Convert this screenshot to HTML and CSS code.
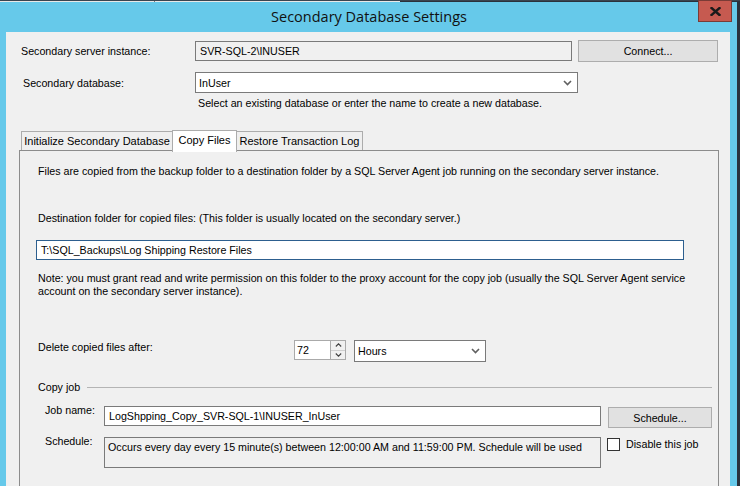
FILE: index.html
```html
<!DOCTYPE html>
<html>
<head>
<meta charset="utf-8">
<link rel="stylesheet" href="styles.css">
</head>
<body>
<div class="topstrip"><div class="ts-light"><span class="ts-line"></span></div></div>
<div class="window">
  <div class="titlebar">
    <span class="title">Secondary Database Settings</span>
    <div class="close"><svg width="11" height="9" viewBox="0 0 11 9"><path d="M1.5 1 L9.5 8 M9.5 1 L1.5 8" stroke="#1a1a1a" stroke-width="2.4" stroke-linecap="square"/></svg></div>
  </div>
  <div class="content">
    <div class="top-grid">
      <div class="lbl l1">Secondary server instance:</div>
      <div class="tb readonly srv">SVR-SQL-2\INUSER</div>
      <div class="btn connect">Connect...</div>
      <div class="lbl l2">Secondary database:</div>
      <div class="combo dbcombo"><span>InUser</span><svg class="chev" width="9" height="6" viewBox="0 0 9 6"><path d="M1 1 L4.5 4.5 L8 1" fill="none" stroke="#606060" stroke-width="1.6"/></svg></div>
      <div class="hint">Select an existing database or enter the name to create a new database.</div>
    </div>

    <div class="tabs">
      <div class="tab t1">Initialize Secondary Database</div>
      <div class="tab sel t2">Copy Files</div>
      <div class="tab t3">Restore Transaction Log</div>
    </div>
    <div class="panel">
      <p class="txt p1">Files are copied from the backup folder to a destination folder by a SQL Server Agent job running on the secondary server instance.</p>
      <p class="txt p2">Destination folder for copied files: (This folder is usually located on the secondary server.)</p>
      <div class="tb focus dest">T:\SQL_Backups\Log Shipping Restore Files</div>
      <p class="txt note">Note: you must grant read and write permission on this folder to the proxy account for the copy job (usually the SQL Server Agent service<br>account on the secondary server instance).</p>
      <div class="delrow">
        <div class="lbl dellbl">Delete copied files after:</div>
        <div class="spin">
          <div class="spinval">72</div>
          <div class="spinbtns">
            <div class="sb"><svg width="7" height="4" viewBox="0 0 7 4"><path d="M0.8 3.5 L3.5 0.8 L6.2 3.5" fill="none" stroke="#404040" stroke-width="1.1"/></svg></div>
            <div class="sb"><svg width="7" height="4" viewBox="0 0 7 4"><path d="M0.8 0.5 L3.5 3.2 L6.2 0.5" fill="none" stroke="#404040" stroke-width="1.1"/></svg></div>
          </div>
        </div>
        <div class="combo hours"><span>Hours</span><svg class="chev" width="9" height="6" viewBox="0 0 9 6"><path d="M1 1 L4.5 4.5 L8 1" fill="none" stroke="#606060" stroke-width="1.6"/></svg></div>
      </div>
      <div class="group">
        <span class="glbl">Copy job</span><span class="gline"></span>
      </div>
      <div class="jobrow">
        <div class="lbl jl">Job name:</div>
        <div class="tb jobname">LogShpping_Copy_SVR-SQL-1\INUSER_InUser</div>
        <div class="btn sched">Schedule...</div>
      </div>
      <div class="schedrow">
        <div class="lbl jl">Schedule:</div>
        <div class="tb readonly schedbox">Occurs every day every 15 minute(s) between 12:00:00 AM and 11:59:00 PM. Schedule will be used</div>
        <div class="chk"><span class="box"></span><span class="chklbl">Disable this job</span></div>
      </div>
    </div>
  </div>
</div>
</body>
</html>
```
FILE: styles.css
```css
html, body {
  margin: 0;
  padding: 0;
}
body {
  width: 740px;
  height: 486px;
  overflow: hidden;
  background: #2a323d;
  font-family: "Liberation Sans", Arial, sans-serif;
  font-size: 10.7px;
  color: #000;
}
.topstrip {
  height: 2px;
  border-top: 1px solid #3a4550;
  box-sizing: border-box;
  display: flex;
}
.ts-light {
  width: 400px;
  background: #e8e8e8;
  display: flex;
}
.ts-line {
  width: 1px;
  margin-left: 154px;
  background: #777;
}
.window {
  width: 737px;
  height: 484px;
  background: #66c9ea;
  position: relative;
  display: flex;
  flex-direction: column;
  padding: 0 7px 0 6px;
  box-sizing: border-box;
}
.titlebar {
  height: 30px;
  display: flex;
  align-items: center;
  justify-content: center;
  flex: none;
}
.title {
  font-family: "Open Sans", "Noto Sans", sans-serif;
  font-size: 14.5px;
  color: #111;
  margin-top: -1px;
  margin-left: 2px;
}
.close {
  position: absolute;
  right: 5px;
  top: -2px;
  width: 34px;
  height: 22px;
  box-sizing: border-box;
  background: #c65a50;
  border: 1px solid #7a3b36;
  display: flex;
  align-items: center;
  justify-content: center;
}
.content {
  flex: 1;
  min-height: 0;
  overflow: hidden;
  background: #f0f0f0;
  padding: 7px 0 0 15px;
  box-sizing: border-box;
}
.lbl {
  white-space: nowrap;
}
.top-grid {
  display: grid;
  grid-template-columns: 168px 377px 140px;
  column-gap: 6px;
  row-gap: 0;
  align-items: center;
}
.tb {
  box-sizing: border-box;
  background: #fff;
  border: 1px solid #7a7a7a;
  padding: 0 3px;
  display: flex;
  align-items: center;
  white-space: nowrap;
  overflow: hidden;
}
.tb.readonly {
  background: #f0f0f0;
}
.tb.focus {
  border-color: #2d5f8f;
}
.srv {
  height: 20px;
  padding-left: 4px;
}
.btn {
  box-sizing: border-box;
  background: #e1e1e1;
  border: 1px solid #adadad;
  display: flex;
  align-items: center;
  justify-content: center;
}
.connect {
  height: 22px;
  margin-top: 1px;
}
.l1 { padding-top: 1px; }
.l2 {
  margin-top: 10px;
  padding-left: 2px;
}
.combo {
  box-sizing: border-box;
  background: #fff;
  border: 1px solid #7a7a7a;
  display: flex;
  align-items: center;
  justify-content: space-between;
  padding: 0 5px 0 3px;
}
.chev { flex: none; }
.dbcombo {
  grid-column: 2 / 4;
  width: 383px;
  height: 21px;
  margin-top: 10px;
}
.hint {
  grid-column: 2 / 4;
  margin-top: 4px;
  padding-left: 3px;
  line-height: 13px;
}
.tabs {
  display: flex;
  align-items: flex-end;
  margin-top: 21px;
  padding-left: 0;
  height: 21px;
  position: relative;
  z-index: 1;
  margin-bottom: -2px;
}
.tab {
  box-sizing: border-box;
  height: 19px;
  border: 1px solid #acacac;
  border-bottom: none;
  background: #efefef;
  display: flex;
  align-items: center;
  justify-content: center;
  white-space: nowrap;
  font-size: 11px;
  margin-bottom: 2px;
}
.tab + .tab { margin-left: -1px; }
.t1 { width: 152px; }
.t2 { width: 65px; }
.t3 { width: 127px; }
.tab.sel {
  height: 22px;
  background: #fff;
  margin-bottom: 0;
  padding-bottom: 3px;
  border-color: #acacac;
}
.panel {
  margin-left: -2px;
  width: 700px;
  height: 400px;
  box-sizing: border-box;
  border: 1px solid #8c8c8c;
  padding: 14px 0 0 18px;
}
.txt {
  margin: 0;
  line-height: 13px;
}
.p2 { margin-top: 34px; }
.dest {
  width: 648px;
  height: 20px;
  margin-top: 15px;
  margin-left: -2px;
  padding-left: 4px;
}
.note {
  margin-top: 12px;
  white-space: nowrap;
}
.delrow {
  display: flex;
  align-items: flex-start;
  margin-top: 42px;
  height: 22px;
}
.dellbl {
  width: 256px;
  line-height: 13px;
  margin-top: 1px;
}
.spin {
  display: flex;
  height: 20px;
  margin-top: 0;
}
.spinval {
  box-sizing: border-box;
  width: 36px;
  height: 20px;
  background: #fff;
  border: 1px solid #aaaaaa;
  border-right: none;
  padding-left: 2px;
  display: flex;
  align-items: center;
}
.spinbtns {
  display: flex;
  flex-direction: column;
  width: 16px;
  height: 20px;
  box-sizing: border-box;
  border: 1px solid #aaaaaa;
}
.sb {
  flex: 1;
  background: #f0f0f0;
  display: flex;
  align-items: center;
  justify-content: center;
}
.sb + .sb { border-top: 1px solid #cfcfcf; }
.hours {
  width: 132px;
  height: 22px;
  margin-left: 8px;
}
.group {
  display: flex;
  align-items: center;
  margin-top: 18px;
  height: 14px;
}
.gline {
  width: 625px;
  height: 1px;
  background: #b4b4b4;
  margin-left: 7px;
}
.jobrow {
  display: flex;
  align-items: flex-start;
  margin-top: 12px;
}
.jl {
  width: 59px;
  padding-left: 7px;
  margin-top: -2px;
}
.jobname {
  width: 497px;
  height: 20px;
  padding-left: 4px;
}
.sched {
  width: 104px;
  height: 21px;
  margin-left: 7px;
  margin-top: 1px;
}
.schedrow {
  display: flex;
  align-items: flex-start;
  margin-top: 9px;
}
.schedbox {
  width: 497px;
  height: 31px;
  align-items: flex-start;
  padding-top: 3px;
}
.chk {
  display: flex;
  align-items: center;
  margin-left: 6px;
  margin-top: 1px;
}
.box {
  width: 13px;
  height: 13px;
  box-sizing: border-box;
  border: 1px solid #333;
  background: #fff;
}
.chklbl {
  margin-left: 6px;
  margin-top: -2px;
}
```
